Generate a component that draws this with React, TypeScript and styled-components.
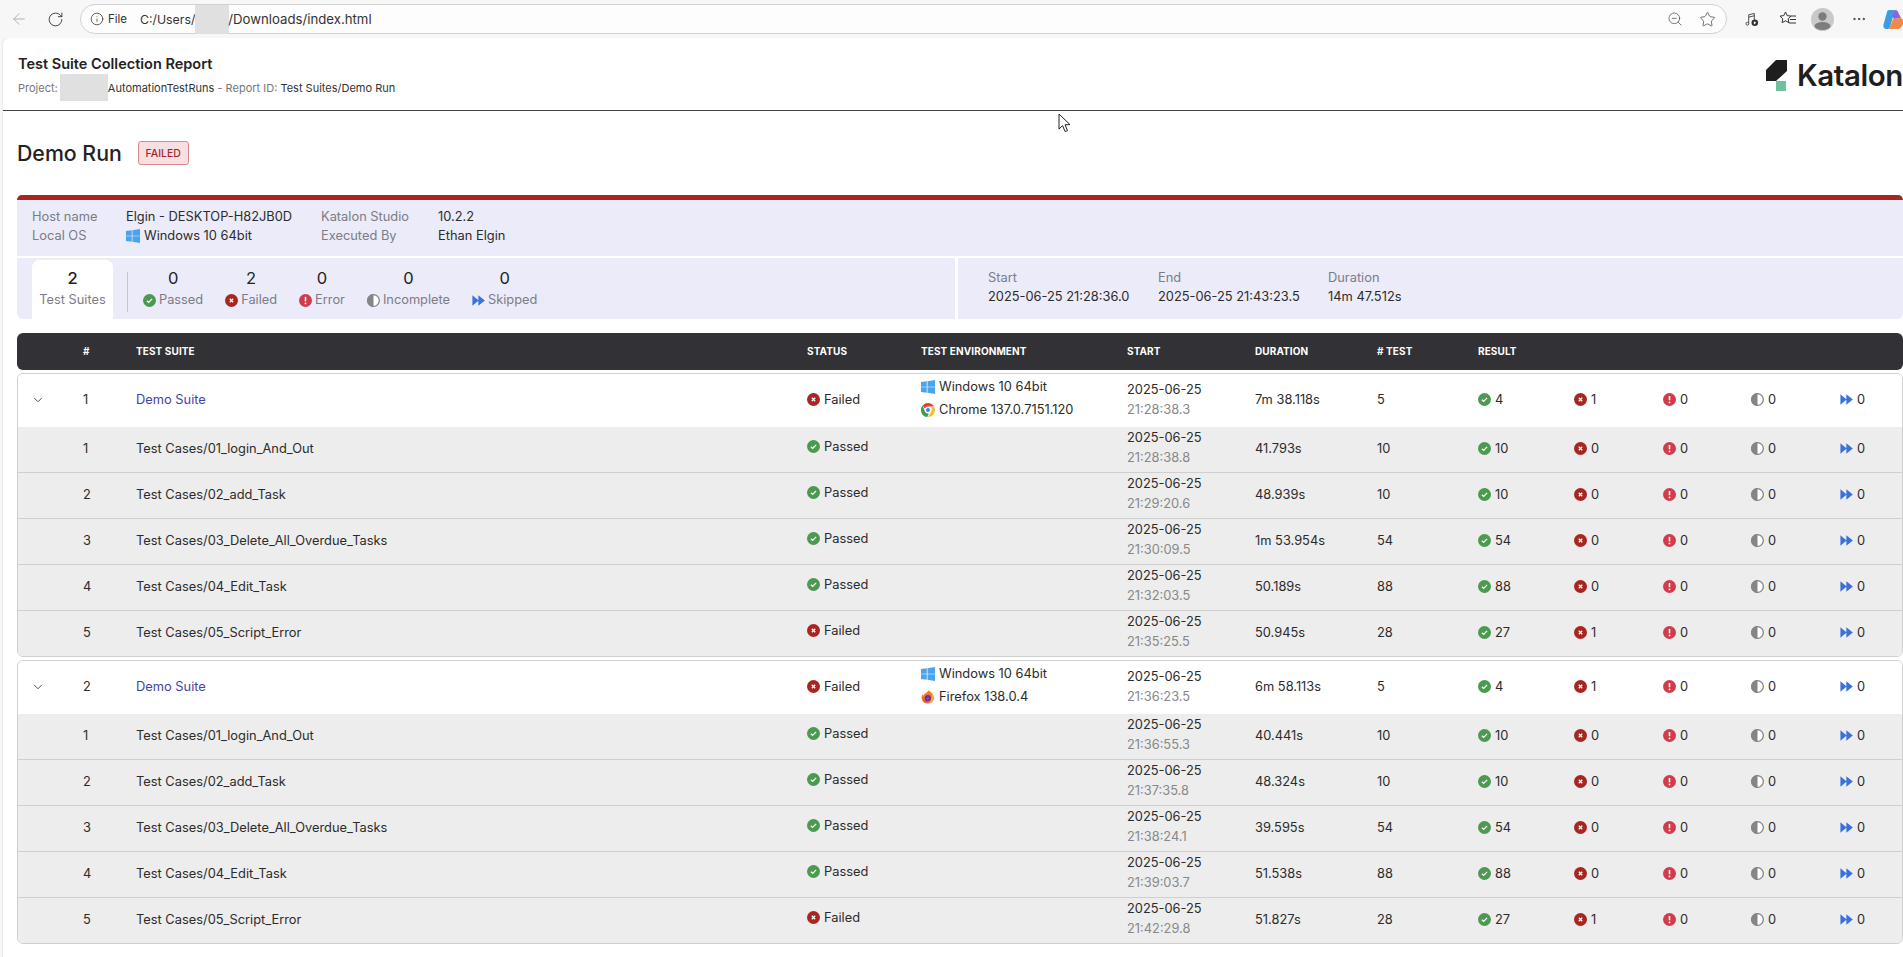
import React from 'react';
import styled, { createGlobalStyle } from 'styled-components';
import { ArrowLeft, ChevronDown, Info, MoreHorizontal, RotateCw, Star, ZoomOut } from 'lucide-react';

const GlobalStyle = createGlobalStyle`
  html, body {
    margin: 0;
    padding: 0;
    height: 957px;
    overflow: hidden;
    background: #f7f7f7;
    font-family: Inter, "Noto Sans", sans-serif;
    color: #2b2b2b;
  }
  * { box-sizing: border-box; }
`;

const GRID = '65px 53px 671px 114px 206px 128px 122px 101px 96px 89px 88px 89px 1fr';

type Kind = 'passed' | 'failed' | 'error' | 'incomplete' | 'skipped';

const StatusIcon = ({ kind, size = 13 }: { kind: Kind; size?: number }) => {
  if (kind === 'passed')
    return (
      <svg width={size} height={size} viewBox="0 0 16 16" style={{ flex: 'none' }}>
        <circle cx="8" cy="8" r="8" fill="#4b9a50" />
        <path d="M4.8 8.3l2.2 2.1 4.2-4.4" fill="none" stroke="#fff" strokeWidth="1.6" />
      </svg>
    );
  if (kind === 'failed')
    return (
      <svg width={size} height={size} viewBox="0 0 16 16" style={{ flex: 'none' }}>
        <circle cx="8" cy="8" r="8" fill="#a82620" />
        <path d="M5.9 5.9l4.2 4.2M10.1 5.9l-4.2 4.2" fill="none" stroke="#fff" strokeWidth="1.6" />
      </svg>
    );
  if (kind === 'error')
    return (
      <svg width={size} height={size} viewBox="0 0 16 16" style={{ flex: 'none' }}>
        <circle cx="8" cy="8" r="8" fill="#cf3d4c" />
        <path d="M8 3.6v5.4" fill="none" stroke="#fff" strokeWidth="1.9" />
        <circle cx="8" cy="11.6" r="1.1" fill="#fff" />
      </svg>
    );
  if (kind === 'incomplete')
    return (
      <svg width={size} height={size} viewBox="0 0 16 16" style={{ flex: 'none' }}>
        <circle cx="8" cy="8" r="7.2" fill="#fff" stroke="#858585" strokeWidth="1.6" />
        <path d="M8 0a8 8 0 0 0 0 16z" fill="#858585" />
      </svg>
    );
  return (
    <svg width={size} height={size} viewBox="0 0 16 16" style={{ flex: 'none' }}>
      <path d="M0.500 1.500L8.200 8 0.500 14.500zM7.800 1.500L15.800 8 7.800 14.500z" fill="#3b71dd" />
    </svg>
  );
};

const WindowsIcon = () => (
  <svg width="14" height="14" viewBox="0 0 16 16" style={{ flex: 'none' }}>
    <path d="M0 2.3l6.6-.9v6.2H0zM7.4 1.3L16 0v7.6H7.4zM0 8.4h6.6v6.2L0 13.7zM7.4 8.4H16V16l-8.6-1.3z" fill="#4aa5ec" />
  </svg>
);

const ChromeIcon = () => (
  <svg width="14" height="14" viewBox="0 0 16 16" style={{ flex: 'none' }}>
    <path d="M8 0a8 8 0 0 1 6.9 4H8a4 4 0 0 0-3.7 2.4L1.9 2.8A8 8 0 0 1 8 0z" fill="#d9453a" />
    <path d="M14.9 4A8 8 0 0 1 8 16l3.5-6A4 4 0 0 0 11.4 5.5z" fill="#f1c02f" />
    <path d="M1.9 2.8L4.6 10A4 4 0 0 0 9 11.8L7.2 16A8 8 0 0 1 1.9 2.8z" fill="#3f9d52" />
    <circle cx="8" cy="8" r="3.1" fill="#fff" />
    <circle cx="8" cy="8" r="2.3" fill="#4285d8" />
  </svg>
);

const FirefoxIcon = () => (
  <svg width="14" height="14" viewBox="0 0 16 16" style={{ flex: 'none' }}>
    <path d="M8.8.4c.6 1.6 2.6 1.900 4 3.500 1.800 2 2.200 4.100 2.200 5.100A7.200 7.200 0 0 1 .8 9.600C.5 7.800 1 6 2 4.900c0 .9.300 1.400.8 1.700C3.300 4.200 6.900 3.400 8.800.4z" fill="#f0792c" />
    <path d="M12 3.500c1.800 2 2.600 3.900 2.700 5.800-1 3.300-3.200 4.900-6 5.300 3-1.600 4.200-6 3.300-11.100z" fill="#f5b52e" />
    <circle cx="7.800" cy="9.400" r="3.600" fill="#6b2fa8" />
    <circle cx="7.800" cy="9.600" r="1.700" fill="#a63e9e" />
    <path d="M1.400 8.400c1 4 4 5.500 7.400 5.300-2.500 1.200-6.800.2-7.400-5.300z" fill="#d6304f" />
  </svg>
);

const Toolbar = styled.div`
  height: 38px;
  display: flex;
  align-items: center;
  background: #f7f7f7;
  position: relative;
`;

const NavSlot = styled.div<{ $w: number; $gap?: number; $color?: string }>`
  width: ${(p) => p.$w}px;
  margin-left: ${(p) => p.$gap || 0}px;
  flex: none;
  display: flex;
  justify-content: center;
  color: ${(p) => p.$color || '#3a3a3a'};
`;

const AddressBar = styled.div`
  width: 1647px;
  height: 30px;
  margin-left: 7px;
  flex: none;
  border: 1px solid #d2d2d2;
  border-radius: 15px;
  background: #fdfdfd;
  display: flex;
  align-items: center;
  padding: 0 0 0 9px;
  font-size: 13.2px;
  color: #333;
`;

const FileTag = styled.span`
  margin-left: 4px;
  font-size: 11.5px;
  width: 32px;
`;

const UrlStart = styled.span`
  font-size: 12.3px;
`;

const Redact = styled.span<{ $w: number; $h: number }>`
  display: inline-block;
  width: ${(p) => p.$w}px;
  height: ${(p) => p.$h}px;
  background: #e0e0e0;
  flex: none;
`;

const AddressRedact = styled(Redact)`
  margin: 0 -1px 0 0;
`;

const MetaRedact = styled(Redact)`
  margin-left: -1px;
`;

const AddressEnd = styled.div`
  margin-left: auto;
  display: flex;
  align-items: center;
  gap: 16px;
  padding-right: 10px;
  color: #4a4a4a;
`;

const Page = styled.div`
  margin-left: 3px;
  height: 919px;
  background: #fff;
  border-top-left-radius: 6px;
  box-shadow: 0 0 2px rgba(0, 0, 0, 0.18);
  overflow: hidden;
`;

const ReportHeader = styled.header`
  height: 73px;
  border-bottom: 1px solid #444;
  display: flex;
  align-items: center;
  justify-content: space-between;
  padding-left: 15px;
`;

const TitleBlock = styled.div`
  margin-top: 3px;
`;

const ReportTitle = styled.h1`
  margin: 0 0 6px;
  font-size: 14.5px;
  line-height: 18px;
  font-weight: 600;
  color: #222;
`;

const ReportMeta = styled.div`
  display: flex;
  align-items: center;
  height: 18px;
  font-size: 11px;
  color: #333;
`;

const Muted = styled.span`
  color: #777;
  white-space: pre;
`;

const Logo = styled.div`
  display: flex;
  align-items: center;
  gap: 10px;
  margin-top: 2px;
`;

const LogoText = styled.span`
  font-family: Inter, sans-serif;
  font-weight: 600;
  font-size: 29.5px;
  color: #1f1f1f;
  letter-spacing: -0.4px;
`;

const Content = styled.main`
  padding-left: 14px;
`;

const RunRow = styled.div`
  display: flex;
  align-items: center;
  gap: 16px;
  height: 84px;
`;

const RunTitle = styled.h2`
  margin: 0;
  font-size: 21.3px;
  font-weight: 500;
  color: #222;
`;

const Badge = styled.span`
  width: 51px;
  height: 24px;
  border: 1px solid #d68a90;
  border-radius: 3px;
  background: #f8dfe1;
  color: #a6272a;
  font-size: 10.5px;
  font-weight: 500;
  display: flex;
  align-items: center;
  justify-content: center;
`;

const RedBar = styled.div`
  height: 5px;
  background: #a3271f;
  border-radius: 5px 5px 0 0;
`;

const HostGrid = styled.div`
  height: 56px;
  background: #ebebf9;
  padding: 7px 0 0 15px;
  display: grid;
  grid-template-columns: 94px 195px 117px 1fr;
  grid-auto-rows: 19px;
  align-items: center;
  font-size: 12.85px;
  margin-bottom: 2px;
`;

const Label = styled.span`
  color: #7c7c85;
`;

const Value = styled.span`
  color: #2b2b2b;
  display: flex;
  align-items: center;
  gap: 4px;
`;

const StatsBar = styled.section`
  height: 61px;
  display: flex;
`;

const Counters = styled.div`
  width: 938px;
  flex: none;
  background: #ebebf9;
  border-radius: 0 0 0 6px;
  display: flex;
  padding-left: 15px;
`;

const TotalTab = styled.div`
  width: 81px;
  height: 59px;
  margin-top: 2px;
  background: #fff;
  border-radius: 7px 7px 0 0;
  display: flex;
  flex-direction: column;
  align-items: center;
  padding-top: 7px;
`;

const Count = styled.span<{ $bold?: boolean }>`
  font-size: 16.5px;
  line-height: 22px;
  font-weight: ${(p) => (p.$bold ? 500 : 400)};
  color: #222;
`;

const CountLabel = styled.span`
  font-size: 12.8px;
  line-height: 22px;
  color: #7c7c85;
  display: flex;
  align-items: center;
  gap: 3px;
  white-space: nowrap;
`;

const CounterList = styled.div`
  margin: 14px 0 7px 14px;
  padding-left: 15px;
  border-left: 1px solid #c4c4cc;
  display: flex;
  gap: 22px;
  height: 40px;
`;

const Counter = styled.div`
  display: flex;
  flex-direction: column;
  align-items: center;
  margin-top: -5px;
`;

const Times = styled.div`
  flex: 1;
  margin-left: 3px;
  background: #ebebf9;
  border-radius: 0 0 6px 0;
  display: flex;
  padding: 10px 0 0 30px;
`;

const TimeItem = styled.div`
  width: 170px;
  font-size: 12.85px;
  line-height: 19px;
  display: flex;
  flex-direction: column;
`;

const TableHead = styled.div`
  height: 37px;
  margin-top: 14px;
  margin-bottom: 3px;
  background: #323135;
  border-radius: 6px;
  padding: 0 0 2px 1px;
  display: grid;
  grid-template-columns: ${GRID};
  align-items: center;
  color: #fff;
  font-size: 10px;
  font-weight: 700;
  letter-spacing: 0.1px;
`;

const HeadCell = styled.span<{ $col: number }>`
  grid-column: ${(p) => p.$col};
  white-space: nowrap;
`;

const SuiteCard = styled.section`
  border: 1px solid #cfcfcf;
  border-radius: 6px;
  overflow: hidden;
  margin-bottom: 3px;
`;

const Row = styled.div<{ $suite?: boolean }>`
  height: ${(p) => (p.$suite ? 53 : 46)}px;
  background: ${(p) => (p.$suite ? '#fff' : '#ededed')};
  display: grid;
  grid-template-columns: ${GRID};
  align-items: center;
  font-size: 12.85px;
  padding-bottom: ${(p) => (p.$suite ? 2 : 3)}px;
  border-bottom: ${(p) => (p.$suite ? 'none' : '1px solid #cfcfcf')};
  &:last-child {
    border-bottom: none;
    height: 45px;
  }
`;

const Toggle = styled.span`
  padding-left: 13px;
  display: flex;
  color: #444;
`;

const SuiteLink = styled.a`
  color: #4444a5;
`;

const StatusCell = styled.span<{ $suite?: boolean }>`
  display: flex;
  align-items: center;
  gap: 4px;
  margin-top: ${(p) => (p.$suite ? 0 : -4)}px;
`;

const EnvCell = styled.div`
  display: flex;
  flex-direction: column;
  gap: 6px;
  margin-top: -3px;
`;

const EnvLine = styled.span`
  display: flex;
  align-items: center;
  gap: 4px;
  line-height: 17px;
`;

const DateCell = styled.div`
  display: flex;
  flex-direction: column;
  line-height: 20px;
`;

const TimeText = styled.span`
  color: #888;
`;

const ResultCell = styled.span`
  display: flex;
  align-items: center;
  gap: 4px;
`;

const Pointer = styled.svg`
  position: absolute;
  left: 1058px;
  top: 113px;
`;

const kinds: Kind[] = ['passed', 'failed', 'error', 'incomplete', 'skipped'];

interface TestRow {
  name: string;
  ok: boolean;
  date: string;
  time: string;
  duration: string;
  total: number;
  passed: number;
  failed: number;
}

interface Suite {
  browser: string;
  browserIcon: React.ReactNode;
  time: string;
  duration: string;
  rows: TestRow[];
}

const names = [
  'Test Cases/01_login_And_Out',
  'Test Cases/02_add_Task',
  'Test Cases/03_Delete_All_Overdue_Tasks',
  'Test Cases/04_Edit_Task',
  'Test Cases/05_Script_Error',
];
const totals = [10, 10, 54, 88, 28];

const buildRows = (times: string[], durations: string[]): TestRow[] =>
  names.map((name, i) => ({
    name,
    ok: i < 4,
    date: '2025-06-25',
    time: times[i],
    duration: durations[i],
    total: totals[i],
    passed: i < 4 ? totals[i] : 27,
    failed: i < 4 ? 0 : 1,
  }));

const suites: Suite[] = [
  {
    browser: 'Chrome 137.0.7151.120',
    browserIcon: <ChromeIcon />,
    time: '21:28:38.3',
    duration: '7m 38.118s',
    rows: buildRows(
      ['21:28:38.8', '21:29:20.6', '21:30:09.5', '21:32:03.5', '21:35:25.5'],
      ['41.793s', '48.939s', '1m 53.954s', '50.189s', '50.945s'],
    ),
  },
  {
    browser: 'Firefox 138.0.4',
    browserIcon: <FirefoxIcon />,
    time: '21:36:23.5',
    duration: '6m 58.113s',
    rows: buildRows(
      ['21:36:55.3', '21:37:35.8', '21:38:24.1', '21:39:03.7', '21:42:29.8'],
      ['40.441s', '48.324s', '39.595s', '51.538s', '51.827s'],
    ),
  },
];

const Results = ({ values }: { values: number[] }) => (
  <>
    {kinds.map((k, i) => (
      <ResultCell key={k}>
        <StatusIcon kind={k} />
        {values[i]}
      </ResultCell>
    ))}
  </>
);

const counters: { kind: Kind; label: string; value: number }[] = [
  { kind: 'passed', label: 'Passed', value: 0 },
  { kind: 'failed', label: 'Failed', value: 2 },
  { kind: 'error', label: 'Error', value: 0 },
  { kind: 'incomplete', label: 'Incomplete', value: 0 },
  { kind: 'skipped', label: 'Skipped', value: 0 },
];

const BrowserBar = () => (
  <Toolbar>
    <NavSlot $w={37} $color="#a8a8a8">
      <ArrowLeft size={18} strokeWidth={1.2} />
    </NavSlot>
    <NavSlot $w={36}>
      <RotateCw size={17} strokeWidth={1.3} />
    </NavSlot>
    <AddressBar>
      <Info size={14} strokeWidth={1.3} />
      <FileTag>File</FileTag>
      <UrlStart>C:/Users/</UrlStart>
      <AddressRedact $w={34} $h={29} />
      /Downloads/index.html
      <AddressEnd>
        <ZoomOut size={16} strokeWidth={1.1} />
        <Star size={17} strokeWidth={1.1} />
      </AddressEnd>
    </AddressBar>
    <NavSlot $w={18} $gap={15}>
      <svg width="15" height="15" viewBox="0 0 16 16" fill="none" stroke="#444" strokeWidth="1">
        <path d="M5 12V3l6-1.500v7" />
        <circle cx="3.600" cy="12.500" r="1.500" />
        <path d="M5 5.500l6-1.500" />
        <circle cx="11.500" cy="11.500" r="3.500" fill="#333" stroke="none" />
        <path d="M10.500 9.800v3.400l2.700-1.700z" fill="#fff" stroke="none" />
      </svg>
    </NavSlot>
    <NavSlot $w={18} $gap={19}>
      <svg width="18" height="18" viewBox="0 0 18 18" fill="none" stroke="#333" strokeWidth="1">
        <path d="M6.500 2l1.700 3.600 3.800.5-2.800 2.700.7 3.900-3.400-1.900-3.400 1.900.7-3.900L1 6.100l3.800-.5z" />
        <path d="M12 6h5M11 9.500h6M10 13h7" />
      </svg>
    </NavSlot>
    <NavSlot $w={23} $gap={14}>
      <svg width="23" height="23" viewBox="0 0 23 23">
        <circle cx="11.500" cy="11.500" r="11.500" fill="#c9c9c9" />
        <circle cx="11.500" cy="8.500" r="4.200" fill="#7d7d7d" />
        <ellipse cx="11.500" cy="18" rx="8" ry="4" fill="#7d7d7d" />
      </svg>
    </NavSlot>
    <NavSlot $w={18} $gap={16}>
      <MoreHorizontal size={16} strokeWidth={1.5} />
    </NavSlot>
    <NavSlot $w={14} $gap={15}>
      <svg width="21" height="21" viewBox="0 0 21 21" style={{ flex: 'none', marginRight: -7 }}>
        <path d="M6 1h6L7 18c-.5 1.500-1.500 2-3 2-3 0-4-2-3.500-4.500L4 3c.3-1.300 1-2 2-2z" fill="#3d9be0" />
        <path d="M12 1c2 0 3 1 3.500 3L18 9l-7 1-2-3z" fill="#8f62dc" />
        <path d="M7 18l3-8 8-1c2 1 3 3 2 6-1 3-3 5-6 5H5c1 0 1.600-.7 2-2z" fill="#ef8a4a" />
      </svg>
    </NavSlot>
  </Toolbar>
);

const KatalonMark = () => (
  <svg width="21" height="31" viewBox="0 0 21 31">
    <path d="M10 0h11v11L10 21H0V10z" fill="#1e1e1e" />
    <rect x="10" y="21" width="10" height="10" fill="#72c09d" />
  </svg>
);

export default function App() {
  return (
    <>
      <GlobalStyle />
      <BrowserBar />
      <Page>
        <ReportHeader>
          <TitleBlock>
            <ReportTitle>Test Suite Collection Report</ReportTitle>
            <ReportMeta>
              <Muted>Project: </Muted>
              <MetaRedact $w={48} $h={27} />
              AutomationTestRuns
              <Muted> - Report ID: </Muted>
              Test Suites/Demo Run
            </ReportMeta>
          </TitleBlock>
          <Logo>
            <KatalonMark />
            <LogoText>Katalon</LogoText>
          </Logo>
        </ReportHeader>
        <Content>
          <RunRow>
            <RunTitle>Demo Run</RunTitle>
            <Badge>FAILED</Badge>
          </RunRow>
          <RedBar />
          <HostGrid>
            <Label>Host name</Label>
            <Value>Elgin - DESKTOP-H82JB0D</Value>
            <Label>Katalon Studio</Label>
            <Value>10.2.2</Value>
            <Label>Local OS</Label>
            <Value>
              <WindowsIcon />
              Windows 10 64bit
            </Value>
            <Label>Executed By</Label>
            <Value>Ethan Elgin</Value>
          </HostGrid>
          <StatsBar>
            <Counters>
              <TotalTab>
                <Count $bold>2</Count>
                <CountLabel>Test Suites</CountLabel>
              </TotalTab>
              <CounterList>
                {counters.map((c) => (
                  <Counter key={c.kind}>
                    <Count>{c.value}</Count>
                    <CountLabel>
                      <StatusIcon kind={c.kind} />
                      {c.label}
                    </CountLabel>
                  </Counter>
                ))}
              </CounterList>
            </Counters>
            <Times>
              <TimeItem>
                <Label>Start</Label>
                <span>2025-06-25 21:28:36.0</span>
              </TimeItem>
              <TimeItem>
                <Label>End</Label>
                <span>2025-06-25 21:43:23.5</span>
              </TimeItem>
              <TimeItem>
                <Label>Duration</Label>
                <span>14m 47.512s</span>
              </TimeItem>
            </Times>
          </StatsBar>
          <TableHead>
            <HeadCell $col={2}>#</HeadCell>
            <HeadCell $col={3}>TEST SUITE</HeadCell>
            <HeadCell $col={4}>STATUS</HeadCell>
            <HeadCell $col={5}>TEST ENVIRONMENT</HeadCell>
            <HeadCell $col={6}>START</HeadCell>
            <HeadCell $col={7}>DURATION</HeadCell>
            <HeadCell $col={8}># TEST</HeadCell>
            <HeadCell $col={9}>RESULT</HeadCell>
          </TableHead>
          {suites.map((s, si) => (
            <SuiteCard key={si}>
              <Row $suite>
                <Toggle>
                  <ChevronDown size={14} strokeWidth={1.6} />
                </Toggle>
                <span>{si + 1}</span>
                <SuiteLink>Demo Suite</SuiteLink>
                <StatusCell $suite>
                  <StatusIcon kind="failed" />
                  Failed
                </StatusCell>
                <EnvCell>
                  <EnvLine>
                    <WindowsIcon />
                    Windows 10 64bit
                  </EnvLine>
                  <EnvLine>
                    {s.browserIcon}
                    {s.browser}
                  </EnvLine>
                </EnvCell>
                <DateCell>
                  <span>2025-06-25</span>
                  <TimeText>{s.time}</TimeText>
                </DateCell>
                <span>{s.duration}</span>
                <span>5</span>
                <Results values={[4, 1, 0, 0, 0]} />
              </Row>
              {s.rows.map((r, i) => (
                <Row key={r.name}>
                  <span />
                  <span>{i + 1}</span>
                  <span>{r.name}</span>
                  <StatusCell>
                    <StatusIcon kind={r.ok ? 'passed' : 'failed'} />
                    {r.ok ? 'Passed' : 'Failed'}
                  </StatusCell>
                  <span />
                  <DateCell>
                    <span>{r.date}</span>
                    <TimeText>{r.time}</TimeText>
                  </DateCell>
                  <span>{r.duration}</span>
                  <span>{r.total}</span>
                  <Results values={[r.passed, r.failed, 0, 0, 0]} />
                </Row>
              ))}
            </SuiteCard>
          ))}
        </Content>
      </Page>
      <Pointer width="14" height="20" viewBox="0 0 14 20">
        <path d="M1 1v15l3.600-3.400 2.500 6 2.400-1-2.500-5.800 5-.2z" fill="#fff" stroke="#222" strokeWidth="1" />
      </Pointer>
    </>
  );
}
